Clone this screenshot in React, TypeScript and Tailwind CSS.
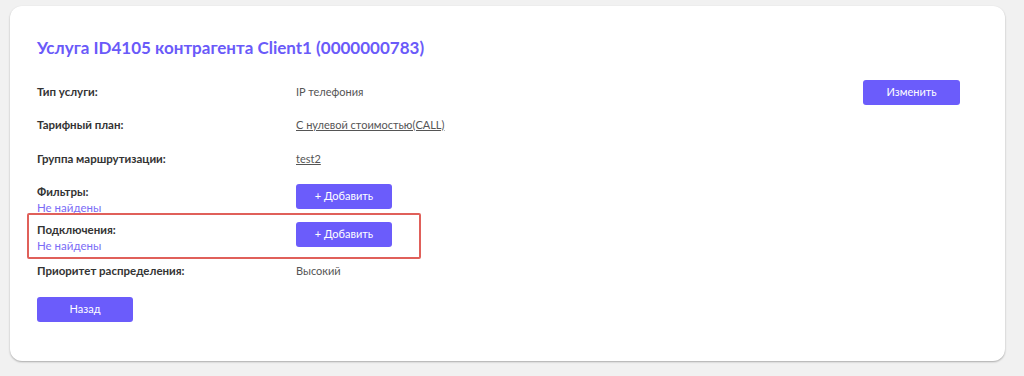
import React from 'react';

const font = { fontFamily: 'Lato, "Noto Sans", sans-serif' };

function AddButton() {
  return (
    <button className="w-[96px] h-[25px] rounded-[3px] bg-[#6b5cfb] text-white text-[11px] flex items-center justify-center">
      + Добавить
    </button>
  );
}

export default function App() {
  return (
    <div className="w-[1024px] h-[376px] bg-[#f1f1f1] pt-[6px] pl-[10px]" style={font}>
      <div className="w-[995px] h-[355px] bg-white rounded-[12px] shadow-[0_1px_2px_rgba(0,0,0,0.3)] pl-[27px] pr-[45px] pt-[30px]">
        <h1 className="text-[17px] leading-[24px] font-bold text-[#6a5af9]">
          Услуга ID4105 контрагента Client1 (0000000783)
        </h1>

        <div className="mt-[19px] text-[11.5px] text-[#333]">
          {/* Тип услуги */}
          <div className="flex items-center h-[26px]">
            <span className="w-[259px] font-bold">Тип услуги:</span>
            <span className="text-[#555] text-[11px]">IP телефония</span>
            <button className="ml-auto w-[97px] h-[25px] rounded-[3px] bg-[#6b5cfb] text-white text-[11px]">
              Изменить
            </button>
          </div>

          <div className="flex items-center h-[26px] mt-[7px]">
            <span className="w-[259px] font-bold">Тарифный план:</span>
            <span className="text-[#555] text-[11px] underline">С нулевой стоимостью(CALL)</span>
          </div>

          <div className="flex items-center h-[26px] mt-[8px]">
            <span className="w-[259px] font-bold">Группа маршрутизации:</span>
            <span className="text-[#555] text-[11px] underline">test2</span>
          </div>

          <div className="flex items-start mt-[12px]">
            <div className="w-[259px] flex flex-col leading-[16px]">
              <span className="font-bold">Фильтры:</span>
              <span className="text-[#7b6cf6]">Не найдены</span>
            </div>
            <AddButton />
          </div>

          <div className="relative flex items-start mt-[6px]">
            <div className="w-[259px] flex flex-col leading-[16px]">
              <span className="font-bold">Подключения:</span>
              <span className="text-[#7b6cf6]">Не найдены</span>
            </div>
            <AddButton />
            <span className="absolute left-[-10px] top-[-9px] w-[394px] h-[46px] border-2 border-[#e0605a] rounded-[2px] pointer-events-none" />
          </div>

          <div className="flex items-center h-[18px] mt-[8px]">
            <span className="w-[259px] font-bold">Приоритет распределения:</span>
            <span className="text-[#555] text-[11px]">Высокий</span>
          </div>

          <button className="mt-[17px] w-[96px] h-[25px] rounded-[3px] bg-[#6b5cfb] text-white text-[11px]">
            Назад
          </button>
        </div>
      </div>
    </div>
  );
}
